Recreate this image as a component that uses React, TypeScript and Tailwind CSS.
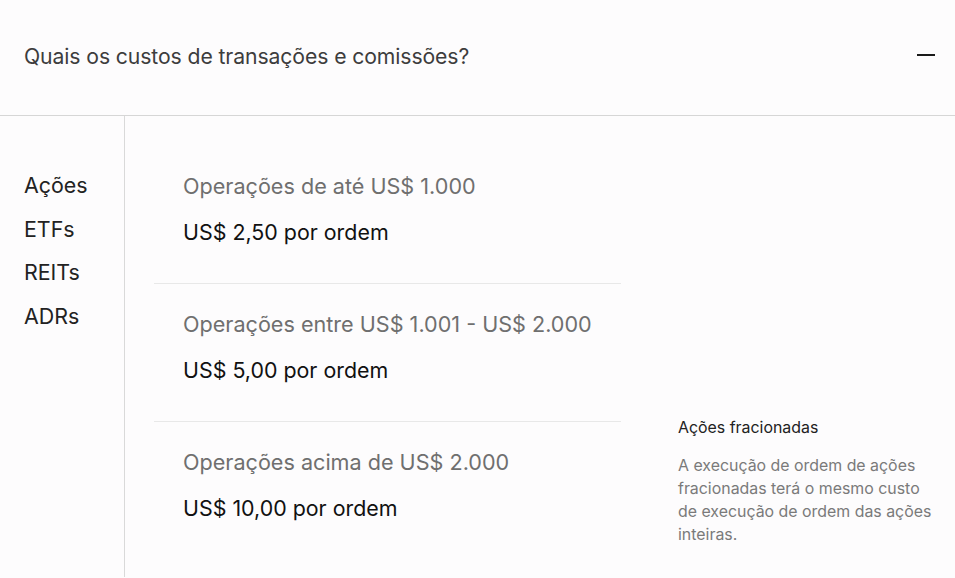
export default function App() {
    const faixas = [
        { label: 'Operações de até US$ 1.000', valor: 'US$ 2,50 por ordem' },
        { label: 'Operações entre US$ 1.001 - US$ 2.000', valor: 'US$ 5,00 por ordem' },
        { label: 'Operações acima de US$ 2.000', valor: 'US$ 10,00 por ordem' },
    ]

    return (
        <main className="min-h-[578px] h-[578px] overflow-hidden bg-[#fdfcfd] font-['Inter',sans-serif]">
            <div className="flex h-[116px] items-center justify-between pl-6 pr-5 border-b border-[#d6d6d6]">
                <h2 className="text-[21.2px] text-[#3d3d3d] tracking-[-0.1px] pb-[2px]">
                    Quais os custos de transações e comissões?
                </h2>
                <span className="block w-[18px] h-[2px] bg-[#1a1a1a] mb-[6px]" />
            </div>

            <div className="flex h-[461px]">
                <nav className="w-[125px] border-r border-[#d9d9d9] pl-6 pt-[48px] text-[21.4px] leading-[43.7px] text-[#222]">
                    <div>Ações</div>
                    <div>ETFs</div>
                    <div>REITs</div>
                    <div>ADRs</div>
                </nav>

                <div className="w-[496px] pl-[29px] pt-[56px]">
                    {faixas.map((f, i) => (
                        <div
                            key={f.label}
                            className={`px-[29px] ${i > 0 ? 'pt-[26px]' : ''} ${i < faixas.length - 1 ? 'pb-[37px] border-b border-[#e8e8e8]' : ''}`}
                        >
                            <div className="text-[21.6px] leading-7 text-[#6f6f6f]">{f.label}</div>
                            <div className="mt-[18px] text-[21.4px] leading-7 text-[#111]">{f.valor}</div>
                        </div>
                    ))}
                </div>

                <aside className="ml-[57px] w-[262px] pt-[302px]">
                    <div className="text-[15.9px] leading-5 text-[#222]">Ações fracionadas</div>
                    <p className="mt-[16px] text-[15.9px] leading-[23px] text-[#7a7a7a]">
                        A execução de ordem de ações fracionadas terá o mesmo custo de execução de ordem das ações inteiras.
                    </p>
                </aside>
            </div>
        </main>
    )
}
